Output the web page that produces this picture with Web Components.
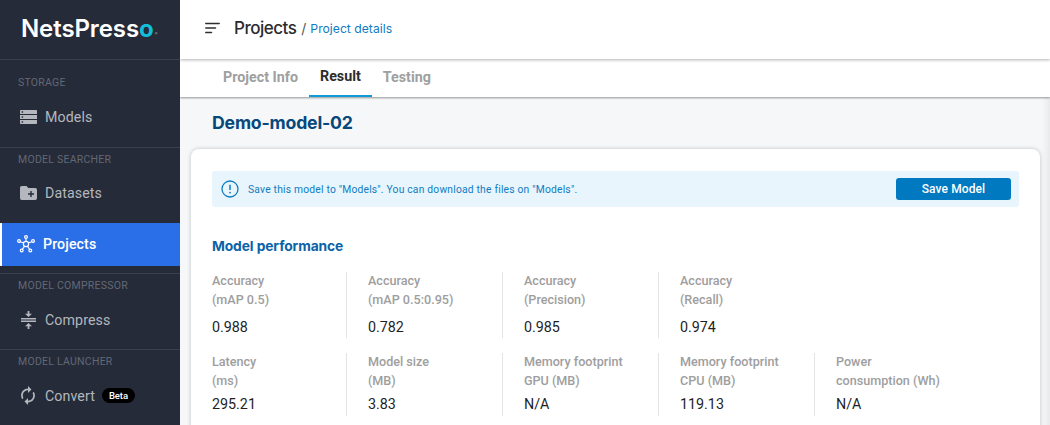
<!DOCTYPE html>
<html>
<head>
<meta charset="utf-8">
<style>
  html, body { margin: 0; height: 100%; overflow: hidden; }
  body { display: flex; width: 1050px; height: 425px; font-family: Roboto, sans-serif; background: #f6f7f9; }
</style>
</head>
<body>
<side-bar></side-bar>
<main-area></main-area>
<script>
const ICONS = {
  models: '<svg width="17" height="14" viewBox="0 0 17 14"><path fill="currentColor" fill-rule="evenodd" d="M.8 0h15.400a.8.8 0 0 1 .8.8V4H0V.8A.8.8 0 0 1 .8 0zM0 5h17v4H0zM0 10h17v3.200a.8.8 0 0 1-.8.8H.8a.8.8 0 0 1-.8-.8zM1.700 1.300v1.400h1.400V1.300zM1.700 6.300v1.400h1.400V6.300zM1.700 11.300v1.400h1.400v-1.400z"/></svg>',
  datasets: '<svg width="17" height="14" viewBox="0 0 17 14"><path fill="currentColor" fill-rule="evenodd" d="M1.700 0h4.800l1.800 2h7A1.700 1.700 0 0 1 17 3.700v8.600a1.700 1.700 0 0 1-1.700 1.700H1.700A1.700 1.700 0 0 1 0 12.300V1.700A1.700 1.700 0 0 1 1.700 0zM10.300 5v2.300H8v1.400h2.300V11h1.400V8.700H14V7.300h-2.300V5z"/></svg>',
  projects: '<svg width="18" height="18" viewBox="0 0 18 18" fill="none" stroke="currentColor" stroke-width="1.200"><circle cx="9" cy="9" r="2.600"/><circle cx="9" cy="2" r="1.400"/><circle cx="2" cy="6" r="1.400"/><circle cx="16" cy="6" r="1.400"/><circle cx="4.700" cy="15.500" r="1.400"/><circle cx="13.300" cy="15.500" r="1.400"/><path d="M9 3.400v3M3.300 6.700l3.400 1.300M14.700 6.700l-3.400 1.300M5.500 14.300l2-3.200M12.500 14.300l-2-3.200"/></svg>',
  compress: '<svg width="15" height="18" viewBox="0 0 15 18" fill="currentColor"><rect x="0" y="7" width="15" height="1.500"/><rect x="0" y="9.500" width="15" height="1.500"/><path d="M6.600 0h1.800v2.800h2.600L7.500 6 4 2.800h2.600zM7.500 12 11 15.200H8.400V18H6.600v-2.800H4z"/></svg>',
  convert: '<svg width="14" height="19" viewBox="4 1 16 22" fill="currentColor"><path transform="matrix(-1 0 0 1 24 0)" d="M12 4V1L8 5l4 4V6c3.310 0 6 2.690 6 6 0 1.010-.25 1.970-.7 2.800l1.460 1.460C19.540 15.030 20 13.570 20 12c0-4.420-3.580-8-8-8zm0 14c-3.310 0-6-2.690-6-6 0-1.010.25-1.970.7-2.800L5.240 7.740C4.460 8.970 4 10.430 4 12c0 4.420 3.580 8 8 8v3l4-4-4-4v3z"/></svg>'
};

class NavItem extends HTMLElement {
  connectedCallback() {
    const active = this.hasAttribute('active');
    this.attachShadow({ mode: 'open' });
    this.shadowRoot.innerHTML = `
      <style>
        :host { display: block; }
        .row {
          height: 43px;
          box-sizing: border-box;
          display: flex;
          align-items: center;
          padding-left: ${active ? '15px' : '19px'};
          gap: 8px;
          color: #b4b7bd;
          font-size: 14.200px;
          letter-spacing: .1px;
        }
        .row.active {
          background: #2b6fe8;
          border-left: 2px solid #fff;
          color: #fff;
          font-weight: 500;
          padding-bottom: 1px;
        }
        .ico { width: 18px; display: flex; justify-content: center; }
      </style>
      <div class="row ${active ? 'active' : ''}">
        <span class="ico">${ICONS[this.getAttribute('icon')]}</span>
        <slot></slot>
      </div>
    `;
  }
}
customElements.define('nav-item', NavItem);

class NavGroup extends HTMLElement {
  connectedCallback() {
    this.attachShadow({ mode: 'open' });
    this.shadowRoot.innerHTML = `
      <style>
        :host { display: block; border-top: 1px solid #3a404d; }
        .label {
          font-size: 10.500px;
          line-height: 12px;
          color: #636875;
          letter-spacing: .25px;
          padding: ${this.getAttribute('pad') || '6px'} 0 0 18px;
          height: 13px;
        }
      </style>
      <div class="label">${this.getAttribute('label')}</div>
      <slot></slot>
    `;
  }
}
customElements.define('nav-group', NavGroup);

class SideBar extends HTMLElement {
  connectedCallback() {
    this.attachShadow({ mode: 'open' });
    this.shadowRoot.innerHTML = `
      <style>
        :host {
          display: block;
          width: 180px;
          height: 425px;
          flex: none;
          background: #252b39;
          font-family: Roboto, sans-serif;
          overflow: hidden;
        }
        .logo {
          height: 59px;
          display: flex;
          align-items: center;
          padding: 0 0 3px 21px;
          font-family: Inter, sans-serif;
          font-weight: 600;
          font-size: 24px;
          letter-spacing: -.1px;
          color: #fff;
          box-sizing: border-box;
        }
        .logo b { color: #13bfd8; font-weight: 700; }
        .logo i { font-size: 4px; color: #aaa; font-style: normal; align-self: flex-end; margin: 0 0 20px 1px; }
        .badge {
          display: inline-block;
          background: #000;
          color: #fff;
          font-size: 9.500px;
          font-weight: 500;
          line-height: 15px;
          padding: 0 7px;
          border-radius: 8px;
          margin-left: -1px;
          letter-spacing: -.1px;
        }
      </style>
      <div class="logo">NetsPress<b>o</b><i>®</i></div>
      <nav-group label="STORAGE" pad="17px" style="height:87px">
        <nav-item icon="models" style="margin-top:5px">Models</nav-item>
      </nav-group>
      <nav-group label="MODEL SEARCHER">
        <nav-item icon="datasets" style="margin-top:4px">Datasets</nav-item>
      </nav-group>
      <nav-item icon="projects" active style="margin-top:9px">Projects</nav-item>
      <nav-group label="MODEL COMPRESSOR" style="margin-top:7px">
        <nav-item icon="compress" style="margin-top:5px">Compress</nav-item>
      </nav-group>
      <nav-group label="MODEL LAUNCHER" style="margin-top:8px">
        <nav-item icon="convert" style="margin-top:5px">Convert<span class="badge">Beta</span></nav-item>
      </nav-group>
    `;
  }
}
customElements.define('side-bar', SideBar);

class TopBar extends HTMLElement {
  connectedCallback() {
    this.attachShadow({ mode: 'open' });
    this.shadowRoot.innerHTML = `
      <style>
        :host {
          display: flex;
          align-items: center;
          height: 59px;
          box-sizing: border-box;
          flex: none;
          background: #fff;
          padding: 0 0 3px 25px;
          position: relative;
          z-index: 2;
          box-shadow: 0 1px 3px rgba(0,0,0,.3);
        }
        svg { display: block; margin-right: 14px; }
        .title { font-family: Inter, sans-serif; font-size: 17px; font-weight: 500; color: #2b2b2f; letter-spacing: -.5px; }
        .sep { font-family: Inter, sans-serif; font-size: 14px; color: #555; margin: 0 4px 0 5px; }
        .crumb { font-family: Inter, sans-serif; font-size: 12.200px; color: #0f7cc2; }
      </style>
      <svg width="15" height="12" viewBox="0 0 15 12" fill="none" stroke="#2f2f33" stroke-width="1.500" stroke-linecap="round">
        <path d="M.8 1.500h13.400M.8 6h9.700M.8 10.500h5.700"/>
      </svg>
      <span class="title">Projects</span><span class="sep">/</span><span class="crumb">Project details</span>
    `;
  }
}
customElements.define('top-bar', TopBar);

class TabBar extends HTMLElement {
  connectedCallback() {
    this.attachShadow({ mode: 'open' });
    this.shadowRoot.innerHTML = `
      <style>
        :host {
          display: flex;
          height: 38px;
          flex: none;
          background: #fff;
          padding-left: 32px;
          position: relative;
          z-index: 1;
          box-shadow: 0 1px 2px rgba(0,0,0,.4);
          font-size: 14.300px;
          font-weight: 700;
          color: #a0a0a0;
          box-sizing: border-box;
        }
        span { display: flex; align-items: center; padding: 0 11px 2px; height: 38px; box-sizing: border-box; }
        .on { color: #2d2d2d; border-bottom: 2px solid #0f9bd8; }
      </style>
      <span>Project Info</span><span class="on">Result</span><span>Testing</span>
    `;
  }
}
customElements.define('tab-bar', TabBar);

class SaveNotice extends HTMLElement {
  connectedCallback() {
    this.attachShadow({ mode: 'open' });
    this.shadowRoot.innerHTML = `
      <style>
        :host {
          display: flex;
          align-items: center;
          height: 36px;
          background: #e8f5fd;
          border-radius: 3px;
          padding: 0 8px 0 9px;
          color: #0f7cc2;
          font-size: 10.300px;
          letter-spacing: .2px;
        }
        svg { margin-right: 9px; flex: none; }
        .msg { flex: 1; }
        button {
          width: 115px;
          height: 22px;
          border: 0;
          border-radius: 3px;
          background: #0079c1;
          color: #fff;
          font: 500 12px Roboto, sans-serif;
          letter-spacing: .1px;
          padding: 0;
        }
      </style>
      <svg width="18" height="18" viewBox="0 0 18 18" fill="none">
        <circle cx="9" cy="9" r="8" stroke="#0f7cc2" stroke-width="1.300"/>
        <path d="M9 4.700v5.300" stroke="#0f7cc2" stroke-width="1.500"/>
        <circle cx="9" cy="12.600" r=".9" fill="#0f7cc2"/>
      </svg>
      <span class="msg"><slot></slot></span>
      <button>Save Model</button>
    `;
  }
}
customElements.define('save-notice', SaveNotice);

class MetricCell extends HTMLElement {
  connectedCallback() {
    const [a, b] = this.getAttribute('label').split('|');
    this.attachShadow({ mode: 'open' });
    this.shadowRoot.innerHTML = `
      <style>
        :host {
          display: block;
          width: 156px;
          box-sizing: border-box;
          height: var(--cell-h, 66px);
          padding-left: 21px;
          border-left: 1px solid #e4e4e4;
          flex: none;
        }
        :host([first]) { padding-left: 0; border-left: 0; width: 134px; }
        .lab { font-size: 12.600px; line-height: 19px; color: #9e9e9e; font-weight: 500; margin-top: -1px; }
        .val { font-size: 14.300px; line-height: 18px; color: #1f1f1f; margin-top: var(--val-gap, 9px); }
      </style>
      <div class="lab">${a}<br>${b}</div>
      <div class="val"><slot></slot></div>
    `;
  }
}
customElements.define('metric-cell', MetricCell);

class MetricRow extends HTMLElement {
  connectedCallback() {
    this.attachShadow({ mode: 'open' });
    this.shadowRoot.innerHTML = `
      <style>
        :host { display: flex; }
      </style>
      <slot></slot>
    `;
  }
}
customElements.define('metric-row', MetricRow);

class ResultCard extends HTMLElement {
  connectedCallback() {
    this.attachShadow({ mode: 'open' });
    this.shadowRoot.innerHTML = `
      <style>
        :host {
          display: block;
          background: #fff;
          border-radius: 8px;
          box-shadow: 0 0 4px rgba(0,0,0,.22);
          padding: 22px 21px 0;
          height: 320px;
          box-sizing: border-box;
        }
        h3 {
          margin: 29px 0 16px;
          font: 700 13.800px/20px Inter, sans-serif;
          color: #0c62a6;
          letter-spacing: -.1px;
        }
        metric-row + metric-row { margin-top: 15px; --val-gap: 5px; --cell-h: 63px; }
      </style>
      <save-notice>Save this model to "Models". You can download the files on "Models".</save-notice>
      <h3>Model performance</h3>
      <metric-row>
        <metric-cell first label="Accuracy|(mAP 0.5)">0.988</metric-cell>
        <metric-cell label="Accuracy|(mAP 0.5:0.95)">0.782</metric-cell>
        <metric-cell label="Accuracy|(Precision)">0.985</metric-cell>
        <metric-cell label="Accuracy|(Recall)">0.974</metric-cell>
      </metric-row>
      <metric-row>
        <metric-cell first label="Latency|(ms)">295.21</metric-cell>
        <metric-cell label="Model size|(MB)">3.83</metric-cell>
        <metric-cell label="Memory footprint|GPU (MB)">N/A</metric-cell>
        <metric-cell label="Memory footprint|CPU (MB)">119.13</metric-cell>
        <metric-cell label="Power|consumption (Wh)">N/A</metric-cell>
      </metric-row>
    `;
  }
}
customElements.define('result-card', ResultCard);

class MainArea extends HTMLElement {
  connectedCallback() {
    this.attachShadow({ mode: 'open' });
    this.shadowRoot.innerHTML = `
      <style>
        :host {
          display: flex;
          flex-direction: column;
          width: 870px;
          height: 425px;
          overflow: hidden;
          font-family: Roboto, sans-serif;
          background: #f6f7f9;
        }
        .content {
          padding: 0 10px 0 11px;
          flex: 1;
          background: linear-gradient(to right, #f6f7f9 calc(100% - 8px), #e9eaec);
        }
        h1 {
          margin: 0;
          height: 52px;
          padding-left: 21px;
          font: 700 17.700px/51px Inter, sans-serif;
          color: #07487c;
          letter-spacing: -.2px;
        }
      </style>
      <top-bar></top-bar>
      <tab-bar></tab-bar>
      <div class="content">
        <h1>Demo-model-02</h1>
        <result-card></result-card>
      </div>
    `;
  }
}
customElements.define('main-area', MainArea);
</script>
</body>
</html>
